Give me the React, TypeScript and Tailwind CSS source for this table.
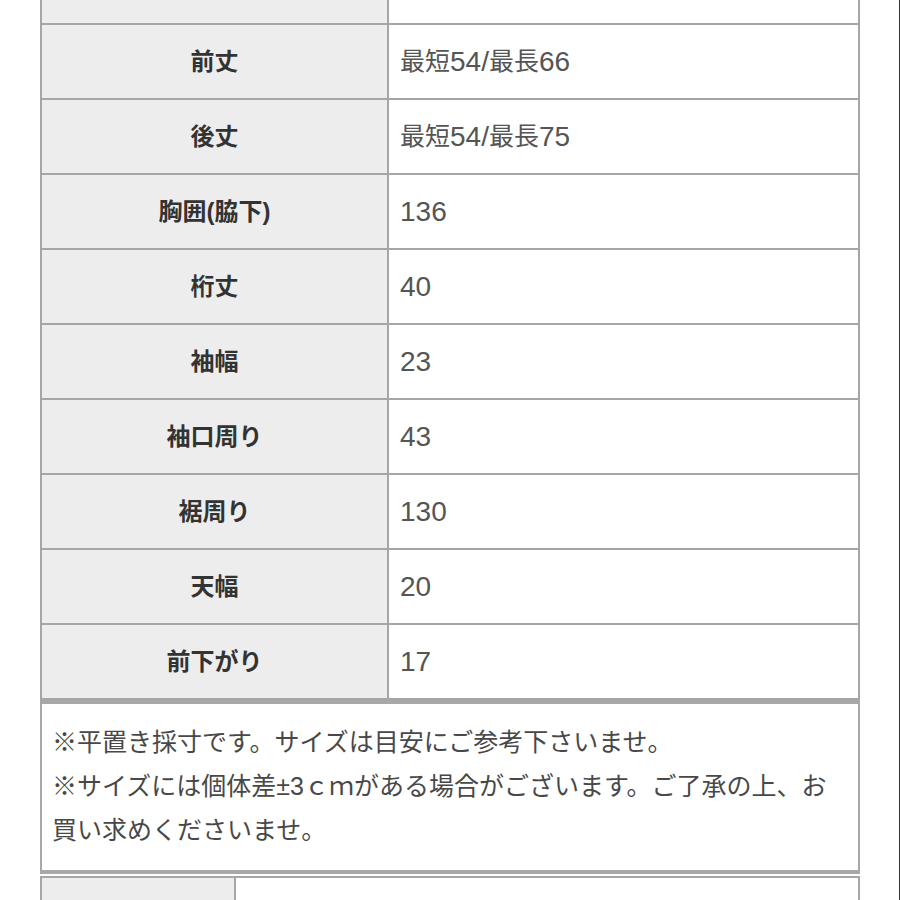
const FONT = { fontFamily: '"Liberation Sans", "Noto Sans CJK JP", sans-serif' }

const ROWS: [string, string][] = [
  ['前丈', '最短54/最長66'],
  ['後丈', '最短54/最長75'],
  ['胸囲(脇下)', '136'],
  ['桁丈', '40'],
  ['袖幅', '23'],
  ['袖口周り', '43'],
  ['裾周り', '130'],
  ['天幅', '20'],
  ['前下がり', '17'],
]

// latin runs sit a little larger than the kana/kanji in the source
function Mixed({ text }: { text: string }) {
  const parts = text.match(/[0-9A-Za-z/.%]+|[^0-9A-Za-z/.%]+/g) ?? []
  return (
    <>
      {parts.map((p, i) =>
        /^[0-9A-Za-z/.%]+$/.test(p) ? (
          <span key={i} className="text-[28px]">
            {p}
          </span>
        ) : (
          <span key={i}>{p}</span>
        ),
      )}
    </>
  )
}

function Row({ label, value, first }: { label: string; value: string; first?: boolean }) {
  return (
    <div
      className={
        'grid grid-cols-[347px_1fr] border-b-2 border-[#a6a6a6] ' + (first ? 'h-[25px]' : 'h-[75px]')
      }
    >
      <div className="flex items-center justify-center border-r-2 border-[#a6a6a6] bg-[#ededed] text-[24px] font-bold text-[#333]">
        {label}
      </div>
      <div className="flex items-center bg-white pl-[11px] text-[25px] text-[#555]">
        <Mixed text={value} />
      </div>
    </div>
  )
}

export default function App() {
  return (
    <div className="h-[900px] w-[900px] overflow-hidden border-r border-[#333] bg-white" style={FONT}>
      <div className="ml-[40px] w-[820px]">
        <div className="border-x-2 border-[#a6a6a6]">
          <Row label="" value="" first />
          {ROWS.map(([l, v]) => (
            <Row key={l} label={l} value={v} />
          ))}
        </div>

        <div className="border-x-2 border-t-[4px] border-b-[4px] border-[#a8a8a8] bg-white pb-[18px] pl-[10px] pt-[16px] text-[25px] leading-[44px] text-[#484848]">
          <div className="whitespace-nowrap">※平置き採寸です。サイズは目安にご参考下さいませ。</div>
          <div className="whitespace-nowrap">※サイズには個体差±3ｃｍがある場合がございます。ご了承の上、お</div>
          <div className="whitespace-nowrap">買い求めくださいませ。</div>
        </div>

        <div className="mt-[2px] border-x-2 border-t-2 border-[#a6a6a6]">
          <div className="grid h-[75px] grid-cols-[194px_1fr]">
            <div className="flex items-center justify-center border-r-2 border-[#a6a6a6] bg-[#ededed] text-[24px] font-bold text-[#333]">
              素材
            </div>
            <div className="flex items-center bg-white pl-[22px] text-[24px] text-[#555]">
              ポリエステル100%
            </div>
          </div>
        </div>
      </div>
    </div>
  )
}
